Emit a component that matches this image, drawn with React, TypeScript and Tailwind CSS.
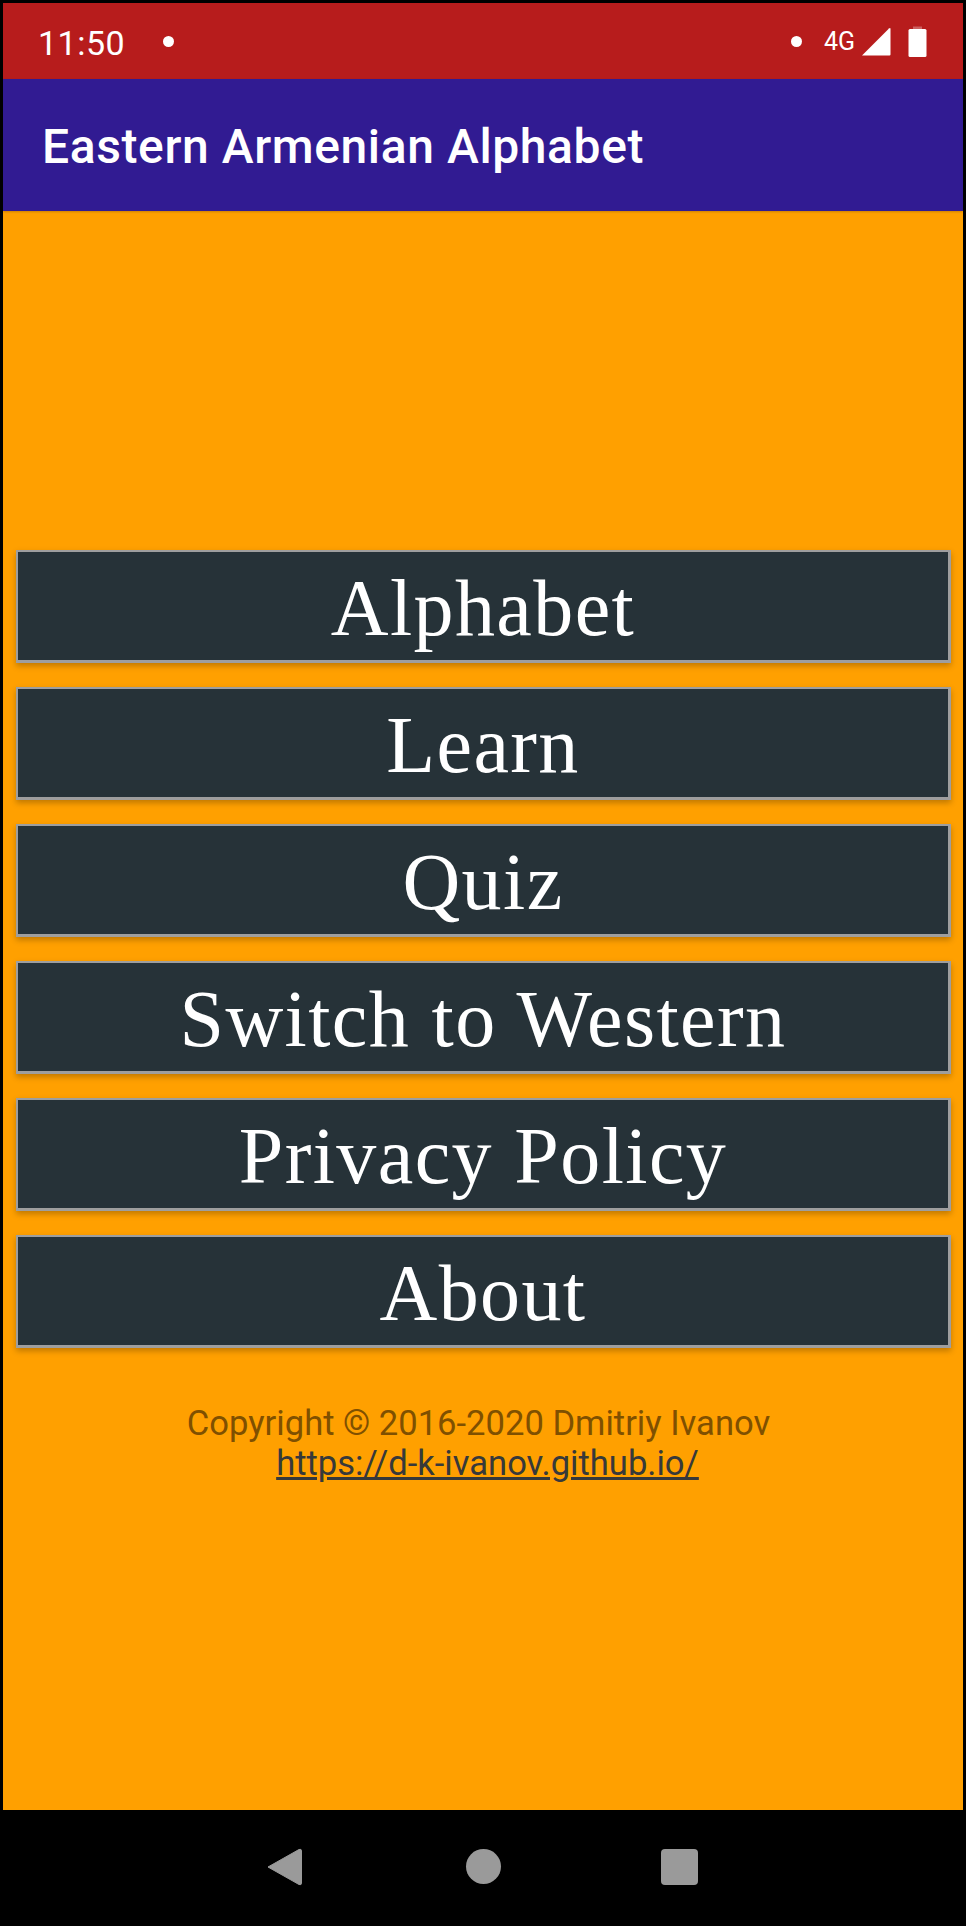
const menuItems = ['Alphabet', 'Learn', 'Quiz', 'Switch to Western', 'Privacy Policy', 'About'];

function StatusBar() {
  return (
    <div className="h-[76px] shrink-0 bg-[#b71c1c] flex items-center pl-[35px] pr-[36px] text-white font-['Roboto',sans-serif]">
      <span className="text-[34px] leading-none tracking-[0.5px] mt-[3px]">11:50</span>
      <span className="ml-[38px] w-[11px] h-[11px] rounded-full bg-white" />
      <div className="ml-auto flex items-center">
        <span className="w-[11px] h-[11px] rounded-full bg-white" />
        <span className="ml-[22px] text-[25px] leading-none">4G</span>
        <svg className="ml-[6px]" width="30" height="29" viewBox="0 0 30 29">
          <path d="M1 28.5 L28 1.5 Q29.5 0.5 29.5 2 L29.5 27.5 Q29.5 28.5 28.5 28.5 Z" fill="#fff" />
        </svg>
        <svg className="ml-[17px]" width="19" height="31" viewBox="0 0 19 31">
          <path d="M5 0.5 H14 V3 H5 Z" fill="#fff" fillOpacity="0.3" />
          <rect x="0.5" y="3" width="18" height="28" rx="1.5" fill="#fff" />
        </svg>
      </div>
    </div>
  );
}

function AppBar() {
  return (
    <div className="h-[132px] shrink-0 bg-[#311b92] flex items-center pl-[39px] shadow-[0_1px_2px_rgba(0,0,0,0.2)] relative z-10">
      <h1 className="text-white text-[48px] tracking-[0.6px] font-medium font-['Roboto',sans-serif] leading-none mt-[4px]">Eastern Armenian Alphabet</h1>
    </div>
  );
}

function NavBar() {
  return (
    <div className="h-[116px] shrink-0 bg-black flex items-center justify-center pb-[3px]">
      <svg width="36" height="38" viewBox="0 0 36 38" className="ml-[-3px]">
        <path d="M2 19 L33 1.5 Q35.5 0.5 35.5 3 L35.5 35 Q35.5 37.5 33 36.5 Z" fill="#9a9a9a" stroke="#9a9a9a" strokeLinejoin="round" />
      </svg>
      <span className="ml-[164px] w-[35px] h-[35px] rounded-full bg-[#9a9a9a]" />
      <span className="ml-[160px] w-[37px] h-[36px] rounded-[4px] bg-[#9a9a9a]" />
    </div>
  );
}

export default function App() {
  return (
    <div className="w-[966px] h-[1926px] bg-black pt-[3px] flex flex-col overflow-hidden">
      <div className="flex-1 mx-[3px] flex flex-col min-h-0">
        <StatusBar />
        <AppBar />
        <main className="flex-1 bg-[#ffa000] pl-[13px] pr-[12px] pt-[339px] flex flex-col">
          <div className="flex flex-col gap-[24px]">
            {menuItems.map((item) => (
              <button
                key={item}
                className="h-[113px] bg-[#263238] border-[3px] border-l-[2px] border-t-[2px] border-[#9e9e9e] shadow-[0_3px_6px_rgba(0,0,0,0.25)] text-white text-[80px] tracking-[1.4px] leading-none font-['Liberation_Serif',serif] flex items-center justify-center pt-[4px]"
              >
                {item}
              </button>
            ))}
          </div>
          <div className="mt-[55px] text-center text-[34.6px] leading-[40px] font-['Roboto',sans-serif]">
            <p className="pr-[10px] text-[#7f5000]">Copyright © 2016-2020 Dmitriy Ivanov</p>
            <p className="pl-[8px]">
              <a className="underline text-[#37393a]">https://d-k-ivanov.github.io/</a>
            </p>
          </div>
        </main>
      </div>
      <NavBar />
    </div>
  );
}
